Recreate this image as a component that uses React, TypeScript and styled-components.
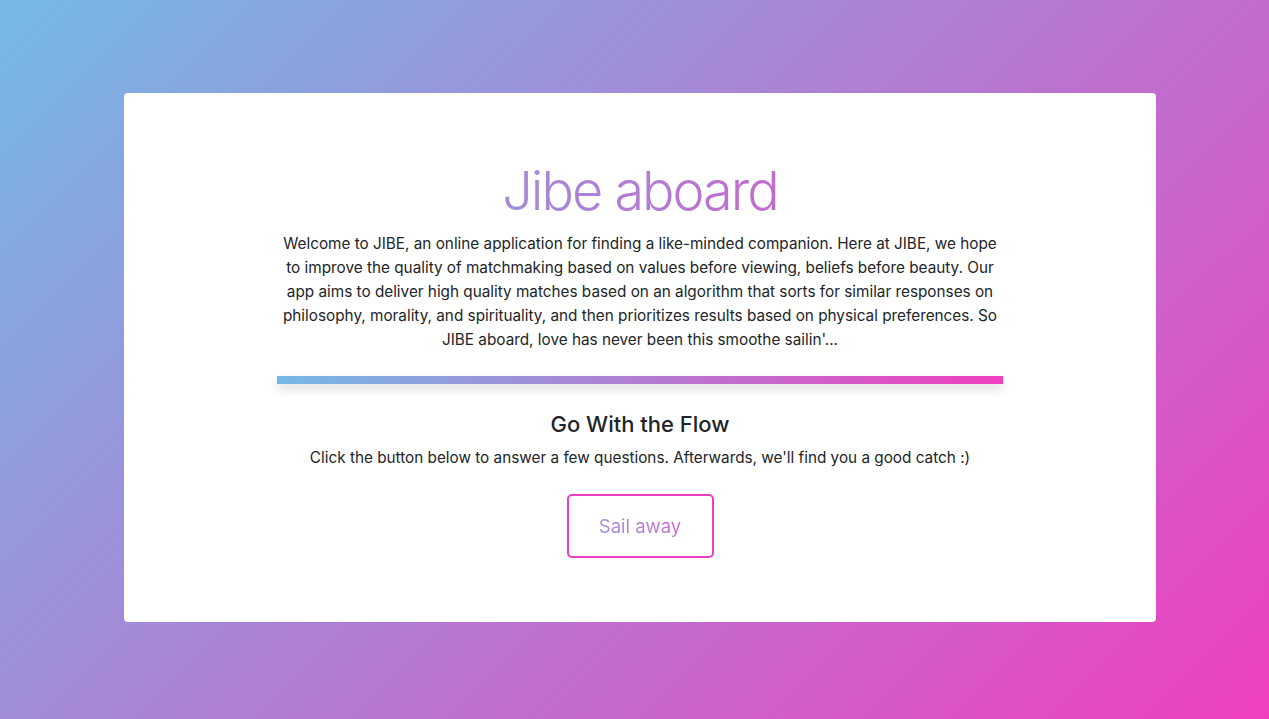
import React from "react";
import styled, { createGlobalStyle } from "styled-components";

const Global = createGlobalStyle`
  html, body { margin: 0; padding: 0; overflow: hidden; }
  body {
    font-family: Inter, "Noto Sans", "Liberation Sans", sans-serif;
    color: #212529;
    background: linear-gradient(135deg, #74b9e6 0%, #ef3fbf 100%);
    min-height: 719px;
  }
`;

const Page = styled.div`
  height: 719px;
  display: flex;
  justify-content: center;
  align-items: flex-start;
  padding: 93px 0 0 11px;
  box-sizing: border-box;
`;

const Card = styled.main`
  width: 1032px;
  box-sizing: border-box;
  background: #fff;
  border-radius: 4px;
  padding: 64px 32px;
  display: flex;
  flex-direction: column;
  align-items: center;
`;

const Title = styled.h1`
  margin: 0 -32px 8px;
  align-self: stretch;
  text-align: center;
  font-size: 54px;
  font-weight: 300;
  line-height: 67px;
  letter-spacing: -2px;
  background: linear-gradient(to right, #74b9e6, #ef3fbf);
  -webkit-background-clip: text;
  background-clip: text;
  color: transparent;
`;

const Lead = styled.p`
  margin: 0;
  width: 726px;
  text-align: center;
  font-size: 15.3px;
  line-height: 24px;
  white-space: nowrap;
  color: #212529;
`;

const Divider = styled.div`
  flex-shrink: 0;
  width: 726px;
  height: 8px;
  margin-top: 24px;
  background: linear-gradient(to right, #74b9e6, #ef3fbf);
  box-shadow: 0 5px 10px rgba(0, 0, 0, 0.14);
`;

const Subtitle = styled.h4`
  margin: 26px 0 7px;
  font-size: 22px;
  font-weight: 500;
  line-height: 29px;
  color: #212529;
`;

const Note = styled.p`
  margin: 0;
  font-size: 15.3px;
  line-height: 24px;
`;

const Button = styled.button`
  flex-shrink: 0;
  margin-top: 24px;
  width: 147px;
  height: 64px;
  box-sizing: border-box;
  border: 2px solid #e940c0;
  border-radius: 5px;
  background: #fff;
  font-family: inherit;
  font-size: 18.5px;
  font-weight: 400;
  cursor: pointer;
  padding: 0;
`;

const ButtonText = styled.span`
  background: linear-gradient(to right, #a48ed9, #c86ecd);
  -webkit-background-clip: text;
  background-clip: text;
  color: transparent;
`;

export default function App() {
  return (
    <>
      <Global />
      <Page>
        <Card>
          <Title>Jibe aboard</Title>
          <Lead>
            Welcome to JIBE, an online application for finding a like-minded companion. Here at JIBE, we hope
            <br />
            to improve the quality of matchmaking based on values before viewing, beliefs before beauty. Our
            <br />
            app aims to deliver high quality matches based on an algorithm that sorts for similar responses on
            <br />
            philosophy, morality, and spirituality, and then prioritizes results based on physical preferences. So
            <br />
            JIBE aboard, love has never been this smoothe sailin'...
          </Lead>
          <Divider />
          <Subtitle>Go With the Flow</Subtitle>
          <Note>Click the button below to answer a few questions. Afterwards, we'll find you a good catch :)</Note>
          <Button>
            <ButtonText>Sail away</ButtonText>
          </Button>
        </Card>
      </Page>
    </>
  );
}
